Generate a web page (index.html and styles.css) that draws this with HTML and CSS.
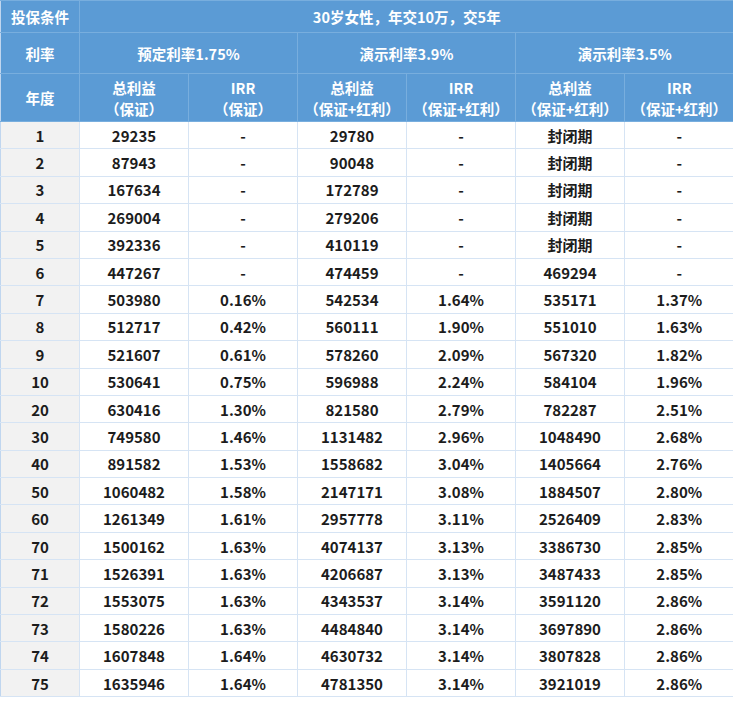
FILE: index.html
```html
<!DOCTYPE html>
<html lang="zh-CN">
<head>
<meta charset="utf-8">
<title>30岁女性，年交10万，交5年</title>
<link rel="stylesheet" href="styles.css">
</head>
<body>
<table class="grid">
  <colgroup>
    <col class="c-year"><col class="c-n"><col class="c-n"><col class="c-n"><col class="c-n"><col class="c-n"><col class="c-last">
  </colgroup>
  <thead>
    <tr class="h1"><th class="head">投保条件</th><th class="head" colspan="6">30岁女性，年交10万，交5年</th></tr>
    <tr class="h2"><th class="head">利率</th><th class="head" colspan="2">预定利率1.75%</th><th class="head" colspan="2">演示利率3.9%</th><th class="head" colspan="2">演示利率3.5%</th></tr>
    <tr class="h3"><th class="head">年度</th><th class="head">总利益<br>（保证）</th><th class="head">IRR<br>（保证）</th><th class="head">总利益<br>（保证+红利）</th><th class="head">IRR<br>（保证+红利）</th><th class="head">总利益<br>（保证+红利）</th><th class="head">IRR<br>（保证+红利）</th></tr>
  </thead>
  <tbody>
    <tr><td class="yr">1</td><td>29235</td><td>-</td><td>29780</td><td>-</td><td>封闭期</td><td>-</td></tr>
    <tr><td class="yr">2</td><td>87943</td><td>-</td><td>90048</td><td>-</td><td>封闭期</td><td>-</td></tr>
    <tr><td class="yr">3</td><td>167634</td><td>-</td><td>172789</td><td>-</td><td>封闭期</td><td>-</td></tr>
    <tr><td class="yr">4</td><td>269004</td><td>-</td><td>279206</td><td>-</td><td>封闭期</td><td>-</td></tr>
    <tr><td class="yr">5</td><td>392336</td><td>-</td><td>410119</td><td>-</td><td>封闭期</td><td>-</td></tr>
    <tr><td class="yr">6</td><td>447267</td><td>-</td><td>474459</td><td>-</td><td>469294</td><td>-</td></tr>
    <tr><td class="yr">7</td><td>503980</td><td>0.16%</td><td>542534</td><td>1.64%</td><td>535171</td><td>1.37%</td></tr>
    <tr><td class="yr">8</td><td>512717</td><td>0.42%</td><td>560111</td><td>1.90%</td><td>551010</td><td>1.63%</td></tr>
    <tr><td class="yr">9</td><td>521607</td><td>0.61%</td><td>578260</td><td>2.09%</td><td>567320</td><td>1.82%</td></tr>
    <tr><td class="yr">10</td><td>530641</td><td>0.75%</td><td>596988</td><td>2.24%</td><td>584104</td><td>1.96%</td></tr>
    <tr><td class="yr">20</td><td>630416</td><td>1.30%</td><td>821580</td><td>2.79%</td><td>782287</td><td>2.51%</td></tr>
    <tr><td class="yr">30</td><td>749580</td><td>1.46%</td><td>1131482</td><td>2.96%</td><td>1048490</td><td>2.68%</td></tr>
    <tr><td class="yr">40</td><td>891582</td><td>1.53%</td><td>1558682</td><td>3.04%</td><td>1405664</td><td>2.76%</td></tr>
    <tr><td class="yr">50</td><td>1060482</td><td>1.58%</td><td>2147171</td><td>3.08%</td><td>1884507</td><td>2.80%</td></tr>
    <tr><td class="yr">60</td><td>1261349</td><td>1.61%</td><td>2957778</td><td>3.11%</td><td>2526409</td><td>2.83%</td></tr>
    <tr><td class="yr">70</td><td>1500162</td><td>1.63%</td><td>4074137</td><td>3.13%</td><td>3386730</td><td>2.85%</td></tr>
    <tr><td class="yr">71</td><td>1526391</td><td>1.63%</td><td>4206687</td><td>3.13%</td><td>3487433</td><td>2.85%</td></tr>
    <tr><td class="yr">72</td><td>1553075</td><td>1.63%</td><td>4343537</td><td>3.14%</td><td>3591120</td><td>2.86%</td></tr>
    <tr><td class="yr">73</td><td>1580226</td><td>1.63%</td><td>4484840</td><td>3.14%</td><td>3697890</td><td>2.86%</td></tr>
    <tr><td class="yr">74</td><td>1607848</td><td>1.64%</td><td>4630732</td><td>3.14%</td><td>3807828</td><td>2.86%</td></tr>
    <tr><td class="yr">75</td><td>1635946</td><td>1.64%</td><td>4781350</td><td>3.14%</td><td>3921019</td><td>2.86%</td></tr>
  </tbody>
</table>
</body>
</html>
```
FILE: styles.css
```css
html, body {
  margin: 0;
  padding: 0;
  background: #ffffff;
}

body {
  font-family: "Noto Sans CJK SC", "Noto Sans", sans-serif;
  font-weight: 700;
  font-size: 15px;
  color: #1c1c1c;
}

.grid {
  width: 733px;
  table-layout: fixed;
  border-collapse: collapse;
  border-spacing: 0;
}

.c-year { width: 79px; }
.c-n { width: 109px; }
.c-last { width: 110px; }

.grid th,
.grid td {
  padding: 0;
  text-align: center;
  vertical-align: middle;
  line-height: 21px;
}

.head {
  background: #5b9bd5;
  color: #ffffff;
  font-size: 14.5px;
  font-weight: 700;
  border: 1px solid #78aede;
}

.h1 { height: 32px; }
.h2 { height: 41px; }
.h3 { height: 48px; }

.grid td {
  height: 26.4px;
  border: 1px solid #d6e4f4;
  background: #ffffff;
}

.grid td.yr {
  background: #f2f2f2;
}

.grid tr > :last-child {
  border-right: 2px solid #a9c8ec;
}

.grid td:first-child,
.grid th:first-child {
  border-left: 1px solid #c0d6ef;
}
```
